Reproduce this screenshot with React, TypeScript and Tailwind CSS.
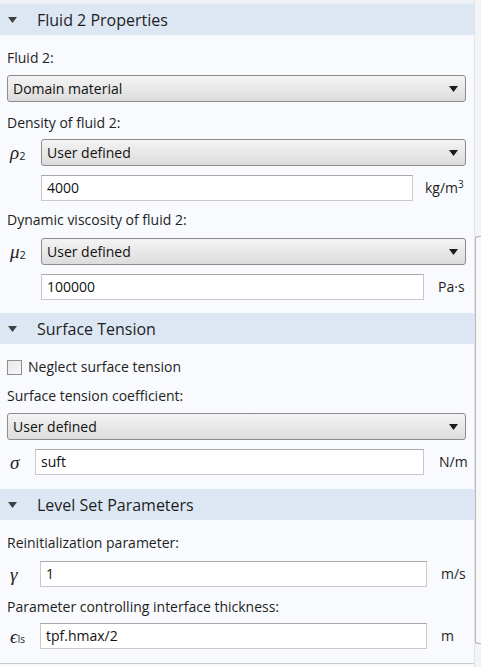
import React from "react";

const F = { fontFamily: '"Open Sans", "Noto Sans", sans-serif' } as const;

function Header({ title }: { title: string }) {
  return (
    <div className="flex h-[31px] shrink-0 items-center bg-[#dde7f4]">
      <svg width="9" height="6" viewBox="0 0 9 6" className="ml-[8px] mr-[20px] shrink-0">
        <path d="M0 0 H9 L4.5 6 Z" fill="#404040" />
      </svg>
      <span className="text-[16px] leading-[20px] text-[#1e1e1e]">{title}</span>
    </div>
  );
}

function Select({ value }: { value: string }) {
  return (
    <div className="flex h-[27px] flex-1 items-center justify-between rounded-[3px] border border-[#8c8c8c] bg-gradient-to-b from-[#f4f4f4] to-[#dcdcdc] pl-[5px] pr-[7px]">
      <span className="text-[14px] leading-[20px] text-[#111]">{value}</span>
      <svg width="9" height="6" viewBox="0 0 9 6">
        <path d="M0 0 H9 L4.5 6 Z" fill="#1a1a1a" />
      </svg>
    </div>
  );
}

function Input({ value }: { value: string }) {
  return (
    <div className="flex h-[26px] flex-1 items-center border border-[#c9c9c9] border-t-[#a9a9a9] bg-white pl-[5px]">
      <span className="text-[14px] leading-[20px] text-[#111]">{value}</span>
    </div>
  );
}

function Label({ text, mt }: { text: string; mt: string }) {
  return (
    <div className={`flex h-[20px] shrink-0 items-center text-[14px] leading-[20px] text-[#1e1e1e] ${mt}`}>{text}</div>
  );
}

function Sym({ children, w }: { children: React.ReactNode; w: string }) {
  return (
    <div className={`flex h-[20px] shrink-0 items-center leading-none ${w}`}>{children}</div>
  );
}

const serif = { fontFamily: '"Liberation Serif", "DejaVu Serif", serif' } as const;

export default function App() {
  return (
    <div style={F} className="flex h-[667px] w-[481px] overflow-hidden bg-[#f8fafd]">
      <div className="flex w-[474px] flex-col">
        <div className="h-[4px] shrink-0 bg-[#eef1f6]" />
        <Header title="Fluid 2 Properties" />
        <div className="flex shrink-0 flex-col pl-[7px] pr-[8px]">
          <Label text="Fluid 2:" mt="mt-[13px]" />
          <div className="mt-[7px] flex shrink-0">
            <Select value="Domain material" />
          </div>
          <Label text="Density of fluid 2:" mt="mt-[11px]" />
          <div className="mt-[6px] flex shrink-0 items-center">
            <Sym w="w-[34px]">
              <span style={serif} className="pl-[3px] text-[19px] italic text-[#222]">ρ</span>
              <span className="mt-[6px] text-[11px] text-[#222]">2</span>
            </Sym>
            <Select value="User defined" />
          </div>
          <div className="mt-[9px] flex shrink-0 items-center">
            <div className="w-[34px] shrink-0" />
            <Input value="4000" />
            <div className="w-[53px] shrink-0 pl-[12px] text-[14px] leading-[20px] text-[#1e1e1e]">
              kg/m<sup className="text-[10px]">3</sup>
            </div>
          </div>
          <Label text="Dynamic viscosity of fluid 2:" mt="mt-[9px]" />
          <div className="mt-[8px] flex shrink-0 items-center">
            <Sym w="w-[34px]">
              <span style={serif} className="pl-[3px] text-[19px] italic text-[#222]">μ</span>
              <span className="mt-[6px] text-[11px] text-[#222]">2</span>
            </Sym>
            <Select value="User defined" />
          </div>
          <div className="mt-[9px] flex shrink-0 items-center">
            <div className="w-[34px] shrink-0" />
            <Input value="100000" />
            <div className="w-[42px] shrink-0 pl-[14px] text-[14px] leading-[20px] text-[#1e1e1e]">Pa·s</div>
          </div>
        </div>
        <div className="mt-[13px] shrink-0">
          <Header title="Surface Tension" />
        </div>
        <div className="flex shrink-0 flex-col pl-[7px] pr-[8px]">
          <div className="mt-[13px] flex h-[20px] shrink-0 items-center">
            <div className="h-[15px] w-[15px] border border-[#8e8f8f] bg-gradient-to-br from-[#e6e6e6] to-[#f8f8f8]" />
            <span className="ml-[6px] text-[14px] leading-[20px] text-[#1e1e1e]">Neglect surface tension</span>
          </div>
          <Label text="Surface tension coefficient:" mt="mt-[9px]" />
          <div className="mt-[7px] flex shrink-0">
            <Select value="User defined" />
          </div>
          <div className="mt-[9px] flex shrink-0 items-center">
            <Sym w="w-[28px]">
              <span style={serif} className="pl-[3px] text-[19px] italic text-[#222]">σ</span>
            </Sym>
            <Input value="suft" />
            <div className="w-[42px] shrink-0 pl-[15px] text-[14px] leading-[20px] text-[#1e1e1e]">N/m</div>
          </div>
        </div>
        <div className="mt-[14px] shrink-0">
          <Header title="Level Set Parameters" />
        </div>
        <div className="flex shrink-0 flex-col pl-[7px] pr-[8px]">
          <Label text="Reinitialization parameter:" mt="mt-[13px]" />
          <div className="mt-[8px] flex shrink-0 items-center">
            <Sym w="w-[33px]">
              <span style={serif} className="pl-[3px] text-[19px] italic text-[#222]">γ</span>
            </Sym>
            <Input value="1" />
            <div className="w-[39px] shrink-0 pl-[14px] text-[14px] leading-[20px] text-[#1e1e1e]">m/s</div>
          </div>
          <Label text="Parameter controlling interface thickness:" mt="mt-[10px]" />
          <div className="mt-[6px] flex shrink-0 items-center">
            <Sym w="w-[33px]">
              <span style={serif} className="pl-[3px] text-[19px] italic text-[#222]">ϵ</span>
              <span className="mt-[6px] text-[10px] text-[#222]">ls</span>
            </Sym>
            <Input value="tpf.hmax/2" />
            <div className="w-[39px] shrink-0 pl-[14px] text-[14px] leading-[20px] text-[#1e1e1e]">m</div>
          </div>
        </div>
        <div className="mt-[14px] h-px shrink-0 bg-[#c8ccd2]" />
      </div>
      <div className="flex w-[7px] shrink-0 flex-col border-l border-[#e2e4e8] bg-[#f3f4f6]">
        <div className="h-[236px] shrink-0" />
        <div className="h-[408px] shrink-0 rounded-tl-[3px] rounded-bl-[3px] border border-r-0 border-[#b4b6ba] bg-[#f7f7f7]" />
      </div>
    </div>
  );
}
